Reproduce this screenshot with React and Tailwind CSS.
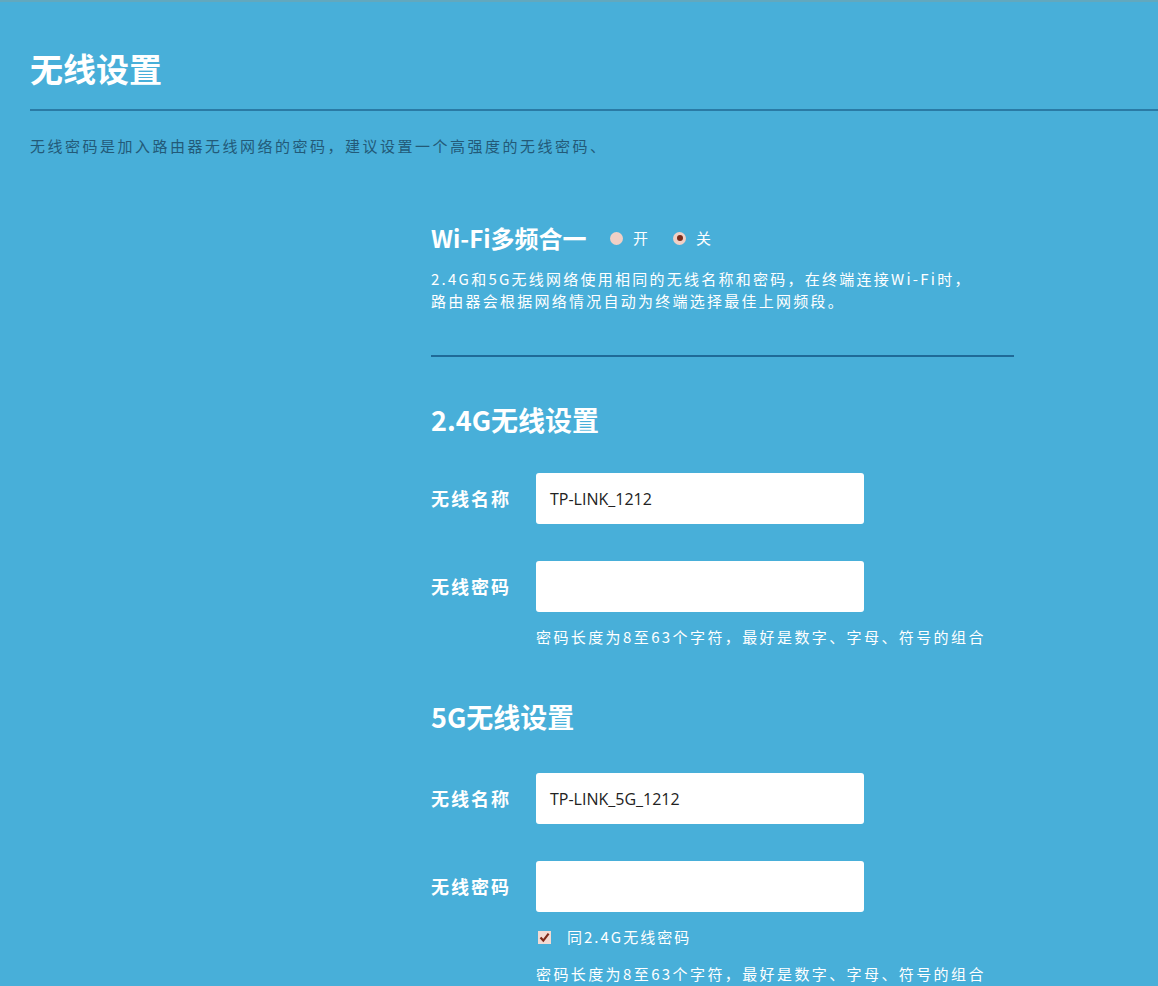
import React from "react";

const cjk = "font-['Noto_Sans_CJK_SC','Noto_Sans',sans-serif]";

const Field = ({ label, value }) => (
  <div className="flex items-center">
    <span className="w-[105px] text-[18px] font-bold tracking-[2px] text-white">{label}</span>
    <div className="flex h-[51px] w-[328px] items-center rounded-[3px] bg-white pl-[14px] font-['Open_Sans',sans-serif] text-[16px] text-[#222]">
      {value}
    </div>
  </div>
);

const Hint = ({ className = "" }) => (
  <p className={`ml-[105px] text-[15px] leading-[20px] tracking-[2.4px] text-white ${className}`}>
    密码长度为8至63个字符，最好是数字、字母、符号的组合
  </p>
);

const Radio = ({ checked, label }) => (
  <label className="flex items-center">
    <span className="flex h-[13px] w-[13px] items-center justify-center rounded-full bg-[#f1d0c6]">
      {checked && <span className="h-[6px] w-[6px] rounded-full bg-[#7a2c1b]" />}
    </span>
    <span className="ml-[10px] text-[15px] text-white">{label}</span>
  </label>
);

export default function App() {
  return (
    <div className={`min-h-[986px] overflow-hidden border-t-2 border-[#62a8be] bg-[#48afd9] ${cjk}`}>
      <div className="pl-[30px]">
        <h1 className="pt-[46px] text-[33px] font-bold leading-[40px] text-white">无线设置</h1>
        <div className="mt-[21px] h-[2px] bg-[#2a7aa5]" />
        <p className="mt-[25px] text-[15px] leading-[20px] tracking-[2.5px] text-[#235a78]">
          无线密码是加入路由器无线网络的密码，建议设置一个高强度的无线密码、
        </p>
      </div>

      <div className="ml-[431px] w-[583px]">
        <div className="mt-[67px] flex h-[30px] items-center">
          <span className="w-[179px] text-[24px] font-bold text-white">Wi-Fi多频合一</span>
          <div className="flex items-center gap-[25px]">
            <Radio label="开" />
            <Radio checked label="关" />
          </div>
        </div>
        <p className="mt-[15px] text-[15px] leading-[22px] tracking-[2.25px] text-white">
          2.4G和5G无线网络使用相同的无线名称和密码，在终端连接Wi-Fi时，
          <br />
          路由器会根据网络情况自动为终端选择最佳上网频段。
        </p>
        <div className="mt-[43px] h-[2px] bg-[#1f6a98]" />

        <h2 className="mt-[46px] text-[27px] font-bold leading-[34px] text-white">2.4G无线设置</h2>
        <div className="mt-[36px]">
          <Field label="无线名称" value="TP-LINK_1212" />
        </div>
        <div className="mt-[37px]">
          <Field label="无线密码" value="" />
        </div>
        <Hint className="mt-[15px]" />

        <h2 className="mt-[53px] text-[27px] font-bold leading-[34px] text-white">5G无线设置</h2>
        <div className="mt-[39px]">
          <Field label="无线名称" value="TP-LINK_5G_1212" />
        </div>
        <div className="mt-[37px]">
          <Field label="无线密码" value="" />
        </div>
        <div className="ml-[107px] mt-[15px] flex h-[20px] items-center">
          <span className="flex h-[13px] w-[13px] items-center justify-center bg-[#f3dad3]">
            <svg width="11" height="11" viewBox="0 0 11 11">
              <path d="M1.5 5.5 L4.3 8.6 L9.6 1.6" fill="none" stroke="#7e2a1a" strokeWidth="2.2" />
            </svg>
          </span>
          <span className="ml-[16px] text-[15px] tracking-[2px] text-white">同2.4G无线密码</span>
        </div>
        <Hint className="mt-[17px]" />
      </div>
    </div>
  );
}
